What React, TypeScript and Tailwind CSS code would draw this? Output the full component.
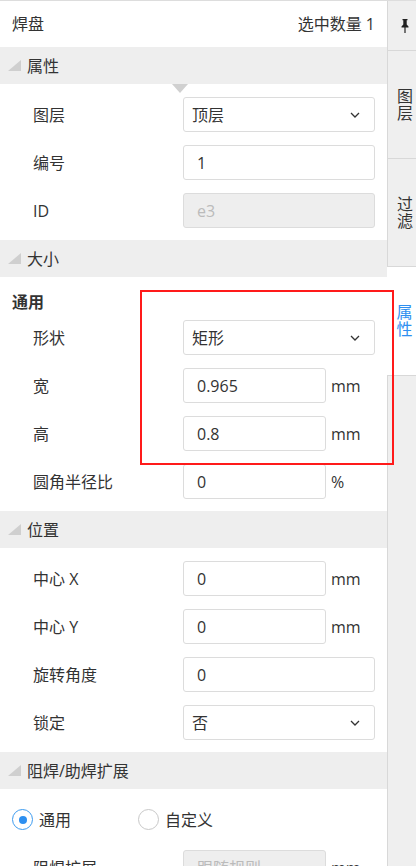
import React from 'react';

const font = { fontFamily: '"Open Sans", "Noto Sans CJK SC", sans-serif' };

const Tri: React.FC = () => (
  <svg width="13" height="11" viewBox="0 0 13 11" className="mr-[6px] shrink-0">
    <polygon points="13,0 13,11 0,11" fill="#cfcfcf" />
  </svg>
);

const Chevron: React.FC = () => (
  <svg width="10" height="6" viewBox="0 0 10 6" className="shrink-0">
    <path d="M1 1l4 4 4-4" fill="none" stroke="#333" strokeWidth="1.3" />
  </svg>
);

const Section: React.FC<{ title: string }> = ({ title }) => (
  <div className="mt-[12px] flex h-[37px] items-center bg-[#eeeeee] pl-[8px] text-[16px] text-[#333]">
    <Tri />
    {title}
  </div>
);

const Row: React.FC<{ label: string; children: React.ReactNode }> = ({ label, children }) => (
  <div className="mt-[13px] flex h-[35px] items-center pl-[33px] pr-[12px]">
    <div className="w-[150px] shrink-0 text-[16px] text-[#333]">{label}</div>
    {children}
  </div>
);

const Input: React.FC<{ value: string; short?: boolean; unit?: string; disabled?: boolean }> = ({ value, short, unit, disabled }) => (
  <>
    <div
      className={`flex h-[35px] items-center rounded-[3px] border border-[#dcdcdc] pl-[13px] text-[16px] ${
        short ? 'w-[143px]' : 'w-[192px]'
      } ${disabled ? 'bg-[#eeeeee] text-[#bbbbbb]' : 'bg-white text-[#333]'}`}
    >
      {value}
    </div>
    {unit && <span className="ml-[5px] text-[16px] text-[#333]">{unit}</span>}
  </>
);

const Select: React.FC<{ value: string }> = ({ value }) => (
  <div className="flex h-[35px] w-[192px] items-center justify-between rounded-[3px] border border-[#dcdcdc] bg-white pl-[8px] pr-[14px] text-[16px] text-[#333]">
    <span>{value}</span>
    <Chevron />
  </div>
);

const Radio: React.FC<{ checked?: boolean; label: string }> = ({ checked, label }) => (
  <div className="flex items-center">
    <span
      className={`flex h-[21px] w-[21px] items-center justify-center rounded-full border-[1.5px] ${
        checked ? 'border-[#3d9bef]' : 'border-[#c8c8c8]'
      }`}
    >
      {checked && <span className="h-[8px] w-[8px] rounded-full bg-[#2d8ff0]" />}
    </span>
    <span className="ml-[6px] text-[16px] text-[#333]">{label}</span>
  </div>
);

const Tab: React.FC<{ label: string; active?: boolean }> = ({ label, active }) => (
  <div
    className={`flex h-[108px] items-center justify-center ${
      active ? 'bg-white text-[#2f8ff0]' : 'border-b border-l border-[#d8d8d8] text-[#333]'
    }`}
  >
    <span className="w-[17px] break-all text-center text-[16px] leading-[17px]">{label}</span>
  </div>
);

const App: React.FC = () => {
  return (
    <div className="relative flex h-screen w-full overflow-hidden border-t border-[#dddddd] bg-white" style={font}>
      {/* Main panel */}
      <div className="w-[387px] shrink-0">
        <div className="flex h-[46px] items-center justify-between pl-[12px] pr-[12px] text-[16px] text-[#333]">
          <span>焊盘</span>
          <span>选中数量 1</span>
        </div>

        <div className="relative">
          <div className="flex h-[37px] items-center bg-[#eeeeee] pl-[8px] text-[16px] text-[#333]">
            <Tri />
            属性
          </div>
          <div className="absolute left-[172px] top-[37px] h-0 w-0 border-x-[8px] border-t-[9px] border-x-transparent border-t-[#d0d0d0]" />
        </div>
        <Row label="图层">
          <Select value="顶层" />
        </Row>
        <Row label="编号">
          <Input value="1" />
        </Row>
        <Row label="ID">
          <Input value="e3" disabled />
        </Row>

        <Section title="大小" />
        <div className="pl-[12px] pt-[13px] text-[16px] font-bold leading-[24px] text-[#333]">通用</div>
        <div className="-mt-[7px]">
          <Row label="形状">
            <Select value="矩形" />
          </Row>
        </div>
        <Row label="宽">
          <Input value="0.965" short unit="mm" />
        </Row>
        <Row label="高">
          <Input value="0.8" short unit="mm" />
        </Row>
        <Row label="圆角半径比">
          <Input value="0" short unit="%" />
        </Row>

        <Section title="位置" />
        <Row label="中心 X">
          <Input value="0" short unit="mm" />
        </Row>
        <Row label="中心 Y">
          <Input value="0" short unit="mm" />
        </Row>
        <Row label="旋转角度">
          <Input value="0" />
        </Row>
        <Row label="锁定">
          <Select value="否" />
        </Row>

        <Section title="阻焊/助焊扩展" />
        <div className="mt-[13px] flex h-[35px] items-center gap-[67px] pl-[12px]">
          <Radio checked label="通用" />
          <Radio label="自定义" />
        </div>
        <Row label="阻焊扩展">
          <Input value="跟随规则" short unit="mm" disabled />
        </Row>
      </div>

      {/* Side tabs */}
      <div className="flex w-[35px] shrink-0 flex-col bg-[#efefef]">
        <div className="flex h-[50px] items-center justify-center border-b border-l border-[#d8d8d8]">
          <svg width="8" height="14" viewBox="0 0 8 14">
            <path d="M1.5 0h5v1.2h-0.8v4.3l1.8 2v1H4.6v5.5h-1.2V8.5H0.5v-1l1.8-2V1.2h-0.8z" fill="#222" />
          </svg>
        </div>
        <Tab label="图层" />
        <Tab label="过滤" />
        <Tab label="属性" active />
        <div className="flex-1 border-l border-t border-[#d8d8d8]" />
      </div>

      {/* highlight box */}
      <div className="pointer-events-none absolute left-[140px] top-[289px] h-[175px] w-[254px] border-2 border-[#ff1a1a]" />
    </div>
  );
};

export default App;
